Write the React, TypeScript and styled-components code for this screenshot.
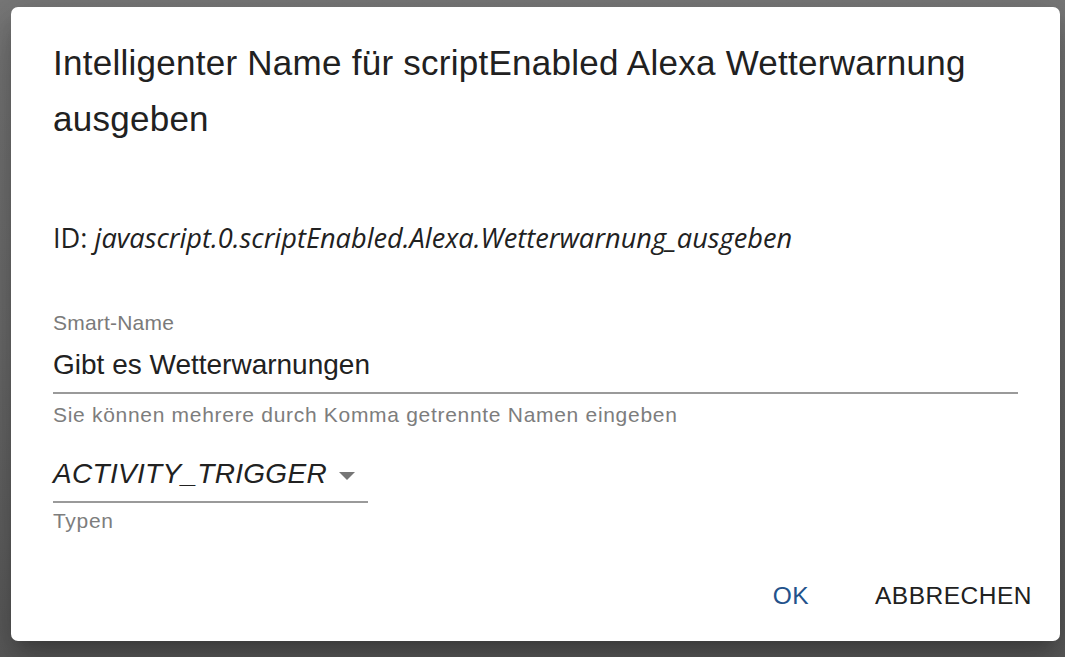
import styled, { createGlobalStyle } from "styled-components";

const GlobalStyle = createGlobalStyle`
  html, body {
    margin: 0;
    padding: 0;
  }
  body {
    height: 657px;
    overflow: hidden;
    background: linear-gradient(180deg, #787878 0%, #6c6c6c 50%, #5a5a5a 100%);
    font-family: "Liberation Sans", Arial, sans-serif;
  }
`;

const Backdrop = styled.div`
  height: 657px;
  padding: 7px 5px 16px 11px;
  box-sizing: border-box;
`;

const Dialog = styled.div`
  width: 1049px;
  height: 634px;
  background: #ffffff;
  border-radius: 7px;
  box-shadow: 0 11px 15px -7px rgba(0, 0, 0, 0.2), 0 24px 38px 3px rgba(0, 0, 0, 0.14),
    0 9px 46px 8px rgba(0, 0, 0, 0.12);
  display: flex;
  flex-direction: column;
  box-sizing: border-box;
`;

const Title = styled.h2`
  margin: 0;
  padding: 28px 42px;
  font-size: 35px;
  font-weight: 400;
  line-height: 56px;
  color: #212121;
  letter-spacing: 0.26px;
`;

const Content = styled.div`
  flex: 1;
  padding: 0 42px;
  display: flex;
  flex-direction: column;
`;

const IdLine = styled.div`
  margin-top: 42px;
  font-family: "Open Sans", "DejaVu Sans", sans-serif;
  font-size: 27.2px;
  line-height: 42px;
  color: #212121;
`;

const IdValue = styled.span`
  font-style: italic;
`;

const Field = styled.div<{ $width?: number; $top: number }>`
  width: ${(p) => (p.$width ? `${p.$width}px` : "100%")};
  margin-top: ${(p) => p.$top}px;
  display: flex;
  flex-direction: column;
`;

const Label = styled.div`
  font-size: 21px;
  line-height: 24px;
  letter-spacing: 0.2px;
  color: #7a7a7a;
`;

const InputRow = styled.div<{ $padTop: number }>`
  display: flex;
  align-items: center;
  justify-content: space-between;
  padding: ${(p) => p.$padTop}px 0 10px 0;
  border-bottom: 2px solid #9a9a9a;
`;

const Value = styled.span<{ $italic?: boolean }>`
  font-size: 28px;
  line-height: 34px;
  letter-spacing: ${(p) => (p.$italic ? "0.3px" : "0")};
  color: #212121;
  font-style: ${(p) => (p.$italic ? "italic" : "normal")};
`;

const Helper = styled.div<{ $top: number }>`
  margin-top: ${(p) => p.$top}px;
  font-size: 21px;
  line-height: 24px;
  letter-spacing: 0.7px;
  color: #7d7d7d;
`;

const Arrow = styled.span`
  width: 0;
  height: 0;
  margin: 3px 13px 0 0;
  border-left: 8px solid transparent;
  border-right: 8px solid transparent;
  border-top: 8px solid #767676;
`;

const Actions = styled.div`
  display: flex;
  justify-content: flex-end;
  align-items: center;
  gap: 14px;
  padding: 14px;
`;

const Button = styled.button<{ $primary?: boolean }>`
  background: none;
  border: none;
  min-width: 112px;
  height: 63px;
  padding: 0 14px;
  font-family: "Liberation Sans", Arial, sans-serif;
  font-size: 24.5px;
  letter-spacing: 0.5px;
  text-transform: uppercase;
  color: ${(p) => (p.$primary ? "#23528b" : "#212121")};
  border-radius: 7px;
  cursor: pointer;
`;

export default function App() {
  return (
    <>
      <GlobalStyle />
      <Backdrop>
        <Dialog>
          <Title>Intelligenter Name für scriptEnabled Alexa Wetterwarnung ausgeben</Title>
          <Content>
            <IdLine>
              ID: <IdValue>javascript.0.scriptEnabled.Alexa.Wetterwarnung_ausgeben</IdValue>
            </IdLine>
            <Field $top={52}>
              <Label>Smart-Name</Label>
              <InputRow $padTop={13}>
                <Value>Gibt es Wetterwarnungen</Value>
              </InputRow>
            </Field>
            <Helper $top={9}>Sie können mehrere durch Komma getrennte Namen eingeben</Helper>
            <Field $width={315} $top={30}>
              <InputRow $padTop={0}>
                <Value $italic>ACTIVITY_TRIGGER</Value>
                <Arrow />
              </InputRow>
            </Field>
            <Helper $top={6}>Typen</Helper>
          </Content>
          <Actions>
            <Button $primary>OK</Button>
            <Button>Abbrechen</Button>
          </Actions>
        </Dialog>
      </Backdrop>
    </>
  );
}
